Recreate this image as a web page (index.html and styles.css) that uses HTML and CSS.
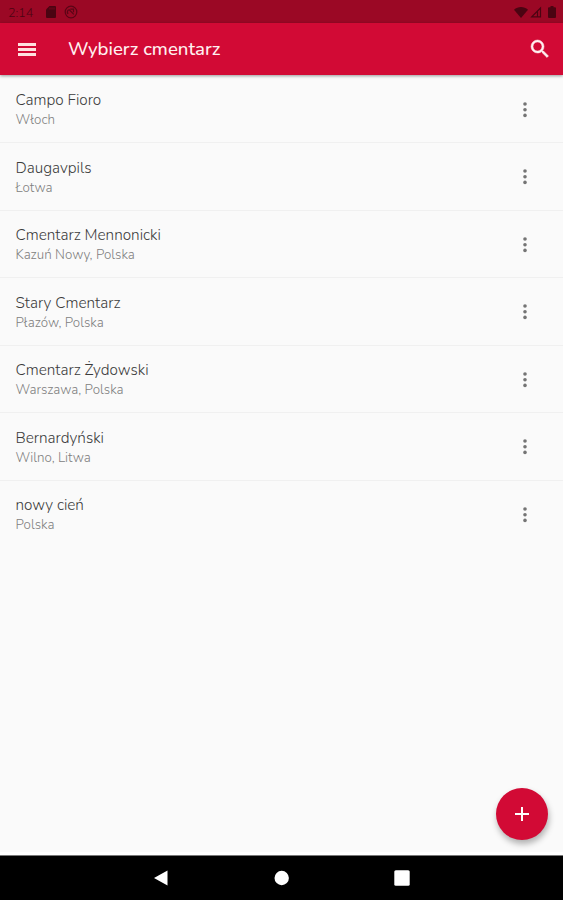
FILE: index.html
```
<!DOCTYPE html>
<html lang="pl">
<head>
    <meta charset="UTF-8">
    <meta name="viewport" content="width=device-width, initial-scale=1.0">
    <title>Wybierz cmentarz</title>
    <link rel="stylesheet" href="styles.css">
</head>
<body>
    <div class="status-bar">
        <span class="clock">2:14</span>
        <svg class="sd" width="10" height="12" viewBox="0 0 10 12"><path d="M3.5 0H9a1 1 0 0 1 1 1v10a1 1 0 0 1-1 1H1a1 1 0 0 1-1-1V3.5z"/><path class="slots" d="M4 1.5v2M6 1.5v2M8 1.5v2"/></svg>
        <svg class="sync" width="14" height="14" viewBox="0 0 14 14"><circle cx="7" cy="7" r="5.8"/><path d="M4 9a3.4 3.4 0 0 1 .6-4.4M5 4.5l4.8 4.8M6.3 4.2h3.2v3"/></svg>
        <div class="status-right">
            <svg width="14" height="11" viewBox="0 0 14 11"><path d="M0 2.8C4-.8 10-.8 14 2.8L7 11z"/></svg>
            <svg width="12" height="12" viewBox="0 0 12 12"><path class="signal" d="M10.5 2v8.8H1.7zM7.5 5v6"/></svg>
            <svg width="8" height="12" viewBox="0 0 8 12"><path d="M2.5 0h3v1.2H7a1 1 0 0 1 1 1V11a1 1 0 0 1-1 1H1a1 1 0 0 1-1-1V2.2a1 1 0 0 1 1-1h1.5z"/></svg>
        </div>
    </div>

    <header class="app-bar">
        <div class="menu"><span></span><span></span><span></span></div>
        <h1>Wybierz cmentarz</h1>
        <svg class="search" width="24" height="24" viewBox="0 0 24 24"><path d="M15.5 14h-.79l-.28-.27A6.47 6.47 0 0 0 16 9.5 6.5 6.5 0 1 0 9.5 16c1.61 0 3.09-.59 4.23-1.57l.27.28v.79l5 4.99L20.49 19l-4.99-5zm-6 0C7.01 14 5 11.99 5 9.5S7.01 5 9.5 5 14 7.01 14 9.5 11.99 14 9.5 14z"/></svg>
    </header>

    <main>
        <ul class="list">
            <li><div><h2>Campo Fioro</h2><p>Włoch</p></div><svg class="more" width="4" height="16" viewBox="0 0 4 16"><circle cx="2" cy="2" r="1.8"/><circle cx="2" cy="7.7" r="1.8"/><circle cx="2" cy="13.4" r="1.8"/></svg></li>
            <li><div><h2>Daugavpils</h2><p>Łotwa</p></div><svg class="more" width="4" height="16" viewBox="0 0 4 16"><circle cx="2" cy="2" r="1.8"/><circle cx="2" cy="7.7" r="1.8"/><circle cx="2" cy="13.4" r="1.8"/></svg></li>
            <li><div><h2>Cmentarz Mennonicki</h2><p>Kazuń Nowy, Polska</p></div><svg class="more" width="4" height="16" viewBox="0 0 4 16"><circle cx="2" cy="2" r="1.8"/><circle cx="2" cy="7.7" r="1.8"/><circle cx="2" cy="13.4" r="1.8"/></svg></li>
            <li><div><h2>Stary Cmentarz</h2><p>Płazów, Polska</p></div><svg class="more" width="4" height="16" viewBox="0 0 4 16"><circle cx="2" cy="2" r="1.8"/><circle cx="2" cy="7.7" r="1.8"/><circle cx="2" cy="13.4" r="1.8"/></svg></li>
            <li><div><h2>Cmentarz Żydowski</h2><p>Warszawa, Polska</p></div><svg class="more" width="4" height="16" viewBox="0 0 4 16"><circle cx="2" cy="2" r="1.8"/><circle cx="2" cy="7.7" r="1.8"/><circle cx="2" cy="13.4" r="1.8"/></svg></li>
            <li><div><h2>Bernardyński</h2><p>Wilno, Litwa</p></div><svg class="more" width="4" height="16" viewBox="0 0 4 16"><circle cx="2" cy="2" r="1.8"/><circle cx="2" cy="7.7" r="1.8"/><circle cx="2" cy="13.4" r="1.8"/></svg></li>
            <li><div><h2>nowy cień</h2><p>Polska</p></div><svg class="more" width="4" height="16" viewBox="0 0 4 16"><circle cx="2" cy="2" r="1.8"/><circle cx="2" cy="7.7" r="1.8"/><circle cx="2" cy="13.4" r="1.8"/></svg></li>
        </ul>
        <div class="fab">
            <svg width="14" height="14" viewBox="0 0 14 14"><path d="M7 0v14M0 7h14"/></svg>
        </div>
    </main>

    <nav class="nav-bar">
        <svg width="16" height="16" viewBox="0 0 16 16"><path d="M13.5.5v15L0 8z"/></svg>
        <svg width="16" height="16" viewBox="0 0 16 16"><circle cx="7.7" cy="8" r="7.2"/></svg>
        <svg width="16" height="16" viewBox="0 0 16 16"><rect x=".3" y=".3" width="15.4" height="15.4" rx="1.5"/></svg>
    </nav>
</body>
</html>
```
FILE: styles.css
```
* {
    box-sizing: border-box;
}
body {
    margin: 0;
    height: 900px;
    display: flex;
    flex-direction: column;
    overflow: hidden;
    background: #fafafa;
    font-family: Nunito, Lato, sans-serif;
}
svg {
    display: block;
    flex: none;
}
h1, h2, p, ul {
    margin: 0;
    padding: 0;
}

/* status bar */
.status-bar {
    height: 23px;
    flex: none;
    display: flex;
    align-items: center;
    padding: 1px 7px 0 8px;
    background: #9b0825;
    fill: #4b0412;
}
.clock {
    width: 38px;
    padding-top: 1px;
    font-size: 12.6px;
    font-weight: 300;
    color: #4b0412;
}
.slots {
    stroke: #9b0825;
    stroke-width: 0.6;
}
.sync {
    margin-left: 8px;
    fill: none;
    stroke: #5a0516;
    stroke-width: 1.2;
}
.status-right {
    margin-left: auto;
    display: flex;
    align-items: center;
    gap: 3px;
}
.status-right svg:first-child {
    margin-right: -1px;
}
.status-right svg:last-child {
    margin-left: 3px;
}
.signal {
    fill: none;
    stroke: #4b0412;
    stroke-width: 1.2;
}

/* app bar */
.app-bar {
    height: 52px;
    flex: none;
    display: flex;
    align-items: center;
    padding: 0 11px 0 18px;
    background: #d20a35;
    color: #fff0f0;
    box-shadow: 0 1px 3px rgba(0,0,0,0.4);
    z-index: 1;
}
.menu {
    width: 50px;
}
.menu span {
    display: block;
    width: 18px;
    height: 3px;
    margin: 2px 0;
    background: #ffe1df;
}
h1 {
    font-size: 18.6px;
    font-weight: 500;
}
.search {
    margin-left: auto;
    fill: #fff0f0;
    stroke: #fff0f0;
    stroke-width: 0.5;
}

/* list */
main {
    flex: 1;
    position: relative;
    border-bottom: 3px solid #fff;
}
.list {
    list-style: none;
    padding-top: 0.5px;
}
.list li {
    height: 67.5px;
    display: flex;
    justify-content: space-between;
    padding: 14.5px 35.7px 0 15.5px;
    border-bottom: 1px solid #f0f0f0;
}
.list li:last-child {
    border-bottom: none;
}
h2 {
    font-size: 15.3px;
    line-height: 21px;
    font-weight: 300;
    color: #3c3c3c;
}
.list p {
    font-size: 13.4px;
    line-height: 18px;
    font-weight: 300;
    color: #808080;
}
.more {
    margin-top: 11.5px;
    fill: #747474;
}
.fab {
    position: absolute;
    right: 15px;
    bottom: 12px;
    width: 52px;
    height: 52px;
    border-radius: 50%;
    display: flex;
    align-items: center;
    justify-content: center;
    background: #d20a35;
    box-shadow: 1px 4px 6px rgba(0,0,0,0.3);
}
.fab path {
    stroke: #fff;
    stroke-width: 2;
}

/* navigation bar */
.nav-bar {
    height: 45px;
    flex: none;
    display: flex;
    justify-content: center;
    align-items: center;
    gap: 104px;
    border-top: 1px solid #777;
    background: #000;
    fill: #fff;
}
```
